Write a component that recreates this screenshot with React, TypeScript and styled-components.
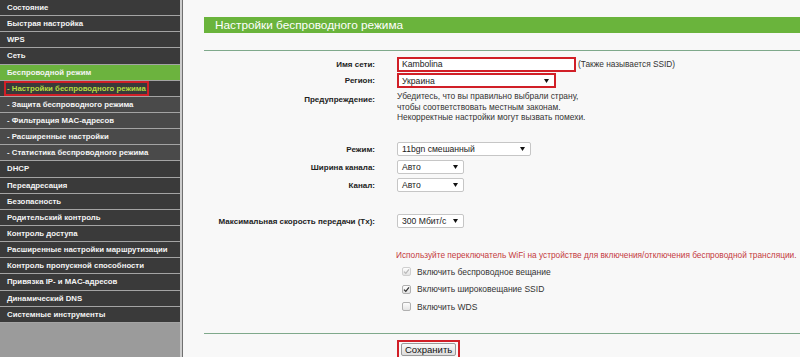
import React from "react";
import styled, { createGlobalStyle } from "styled-components";

const GlobalStyle = createGlobalStyle`
  html, body { margin: 0; padding: 0; }
  body { font-family: "Liberation Sans", Arial, sans-serif; background: #f8f8f8; }
  #root { width: 800px; height: 357px; overflow: hidden; }
`;

const Page = styled.div`
  display: flex;
  width: 800px;
  height: 357px;
  overflow: hidden;
`;

const SidebarFrame = styled.aside`
  flex: none;
  display: flex;
  border-right: 1px solid #707070;
`;

const Sidebar = styled.nav`
  width: 180px;
  height: 100%;
  background: #9b9b9b;
  border-right: 2px solid #cdcdcd;
  display: flex;
  flex-direction: column;
`;

type Kind = "main" | "sub" | "section";

const MenuItem = styled.div<{ $kind: Kind; $active?: boolean }>`
  flex: none;
  height: 15.15px;
  border-bottom: 1px solid #a4a4a4;
  display: flex;
  align-items: center;
  padding-left: ${(p) => (p.$active ? 4 : 7)}px;
  background: ${(p) =>
    p.$kind === "section" ? "#6cb33e" : p.$kind === "sub" ? "#4a4a4a" : "#3a3a3a"};
  color: ${(p) => (p.$active ? "#b6dc3e" : "#f4f4f4")};
  font-size: 7.8px;
  font-weight: bold;
  white-space: nowrap;
`;

const ActiveMark = styled.span`
  border: 2px solid #d11f27;
  padding: 0 1px;
  line-height: 11px;
`;

const Main = styled.main`
  flex: 1;
  min-width: 0;
  background: #f8f8f8;
  padding: 17px 0 0 21px;
  overflow: hidden;
`;

const TitleBar = styled.div`
  height: 16px;
  line-height: 16px;
  background: #6ab43c;
  color: #fff;
  font-size: 11.8px;
  padding-left: 11px;
  white-space: nowrap;
`;

const Divider = styled.div<{ $mt: number }>`
  height: 1px;
  background: #7fa98b;
  margin-top: ${(p) => p.$mt}px;
`;

const FieldRow = styled.div<{ $h: number; $mt?: number; $top?: boolean }>`
  display: grid;
  grid-template-columns: 171px 1fr;
  column-gap: 22px;
  align-items: ${(p) => (p.$top ? "start" : "center")};
  height: ${(p) => p.$h}px;
  margin-top: ${(p) => p.$mt ?? 0}px;
`;

const Label = styled.div<{ $pt?: number }>`
  text-align: right;
  font-weight: bold;
  font-size: 8px;
  color: #222;
  white-space: nowrap;
  padding-top: ${(p) => p.$pt ?? 0}px;
`;

const Inline = styled.div`
  display: flex;
  align-items: center;
`;

const TextInput = styled.input`
  box-sizing: border-box;
  width: 179px;
  height: 15px;
  border: 2px solid #d11f27;
  padding: 0 3px;
  margin: 0;
  font: 8.6px "Liberation Sans", Arial, sans-serif;
  color: #222;
  background: #fff;
  outline: none;
`;

const Note = styled.span`
  margin-left: 2px;
  font-size: 8.3px;
  color: #333;
  white-space: nowrap;
`;

const SelectBox = styled.div<{ $w: number; $marked?: boolean }>`
  box-sizing: border-box;
  width: ${(p) => p.$w}px;
  height: ${(p) => (p.$marked ? 15 : 14)}px;
  display: flex;
  align-items: center;
  justify-content: space-between;
  border: ${(p) => (p.$marked ? "2px solid #d11f27" : "1px solid #c6c6c6")};
  border-radius: ${(p) => (p.$marked ? 0 : 2)}px;
  background: #fff;
  padding: 0 5px 0 ${(p) => (p.$marked ? 3 : 4)}px;
  font-size: 8.6px;
  color: #222;
  white-space: nowrap;
`;

const Warning = styled.div`
  font-size: 8.4px;
  line-height: 10.5px;
  color: #333;
  white-space: nowrap;
`;

const RedNote = styled.div`
  font-size: 8.3px;
  line-height: 12px;
  color: #c43a40;
  white-space: nowrap;
  margin-left: -1px;
`;

const CheckRow = styled.label`
  display: flex;
  align-items: center;
  gap: 6px;
  padding-left: 5px;
  height: 17.5px;
  font-size: 8.5px;
  color: #333;
  white-space: nowrap;
`;

const Box = styled.span<{ $disabled?: boolean }>`
  width: 9px;
  height: 9px;
  box-sizing: border-box;
  border: 1px solid ${(p) => (p.$disabled ? "#cfcfcf" : "#b0b0b0")};
  border-radius: 2px;
  background: linear-gradient(#fdfdfd, #e4e4e4);
  display: flex;
  align-items: center;
  justify-content: center;
`;

const ButtonMark = styled.span`
  display: inline-flex;
  border: 2px solid #d11f27;
  padding: 1px 2px;
`;

const SaveButton = styled.button`
  height: 13px;
  padding: 0 3px;
  margin: 0;
  border: 1px solid #9a9a9a;
  border-radius: 2px;
  background: linear-gradient(#f8f8f8, #dcdcdc);
  font: 9.5px "Liberation Sans", Arial, sans-serif;
  color: #111;
  line-height: 11px;
`;

const Arrow = () => (
  <svg width="5" height="4" viewBox="0 0 5 4">
    <polygon points="0,0 5,0 2.5,4" fill="#111" />
  </svg>
);

const Check = ({ color }: { color: string }) => (
  <svg width="7" height="7" viewBox="0 0 7 7">
    <path d="M1 3.6 L2.8 5.4 L6 1.4" stroke={color} strokeWidth="1.3" fill="none" />
  </svg>
);

const menu: { text: string; kind: Kind; active?: boolean }[] = [
  { text: "Состояние", kind: "main" },
  { text: "Быстрая настройка", kind: "main" },
  { text: "WPS", kind: "main" },
  { text: "Сеть", kind: "main" },
  { text: "Беспроводной режим", kind: "section" },
  { text: "- Настройки беспроводного режима", kind: "main", active: true },
  { text: "- Защита беспроводного режима", kind: "sub" },
  { text: "- Фильтрация MAC-адресов", kind: "sub" },
  { text: "- Расширенные настройки", kind: "sub" },
  { text: "- Статистика беспроводного режима", kind: "sub" },
  { text: "DHCP", kind: "main" },
  { text: "Переадресация", kind: "main" },
  { text: "Безопасность", kind: "main" },
  { text: "Родительский контроль", kind: "main" },
  { text: "Контроль доступа", kind: "main" },
  { text: "Расширенные настройки маршрутизации", kind: "main" },
  { text: "Контроль пропускной способности", kind: "main" },
  { text: "Привязка IP- и MAC-адресов", kind: "main" },
  { text: "Динамический DNS", kind: "main" },
  { text: "Системные инструменты", kind: "main" },
];

export default function App() {
  return (
    <>
      <GlobalStyle />
      <Page>
        <SidebarFrame>
          <Sidebar>
            {menu.map((m) => (
              <MenuItem key={m.text} $kind={m.kind} $active={m.active}>
                {m.active ? <ActiveMark>{m.text}</ActiveMark> : m.text}
              </MenuItem>
            ))}
          </Sidebar>
        </SidebarFrame>
        <Main>
          <TitleBar>Настройки беспроводного режима</TitleBar>
          <Divider $mt={17} />

          <FieldRow $h={16} $mt={5}>
            <Label>Имя сети:</Label>
            <Inline>
              <TextInput value="Kambolina" readOnly />
              <Note>(Также называется SSID)</Note>
            </Inline>
          </FieldRow>
          <FieldRow $h={17}>
            <Label>Регион:</Label>
            <SelectBox $w={159} $marked>
              <span>Украина</span>
              <Arrow />
            </SelectBox>
          </FieldRow>
          <FieldRow $h={32} $mt={2} $top>
            <Label $pt={4}>Предупреждение:</Label>
            <Warning>
              Убедитесь, что вы правильно выбрали страну,
              <br />
              чтобы соответствовать местным законам.
              <br />
              Некорректные настройки могут вызвать помехи.
            </Warning>
          </FieldRow>

          <FieldRow $h={18} $mt={17}>
            <Label>Режим:</Label>
            <SelectBox $w={134}>
              <span>11bgn смешанный</span>
              <Arrow />
            </SelectBox>
          </FieldRow>
          <FieldRow $h={18}>
            <Label>Ширина канала:</Label>
            <SelectBox $w={67}>
              <span>Авто</span>
              <Arrow />
            </SelectBox>
          </FieldRow>
          <FieldRow $h={18}>
            <Label>Канал:</Label>
            <SelectBox $w={67}>
              <span>Авто</span>
              <Arrow />
            </SelectBox>
          </FieldRow>
          <FieldRow $h={18} $mt={18}>
            <Label>Максимальная скорость передачи (Tx):</Label>
            <SelectBox $w={67}>
              <span>300 Мбит/с</span>
              <Arrow />
            </SelectBox>
          </FieldRow>

          <FieldRow $h={12} $mt={19}>
            <span />
            <RedNote>
              Используйте переключатель WiFi на устройстве для включения/отключения беспроводной трансляции.
            </RedNote>
          </FieldRow>
          <FieldRow $h={52.5} $mt={2} $top>
            <span />
            <div>
              <CheckRow>
                <Box $disabled>
                  <Check color="#b8b8b8" />
                </Box>
                Включить беспроводное вещание
              </CheckRow>
              <CheckRow>
                <Box>
                  <Check color="#333" />
                </Box>
                Включить широковещание SSID
              </CheckRow>
              <CheckRow>
                <Box />
                Включить WDS
              </CheckRow>
            </div>
          </FieldRow>

          <Divider $mt={17.5} />
          <FieldRow $h={17} $mt={5} $top>
            <span />
            <div>
              <ButtonMark>
                <SaveButton>Сохранить</SaveButton>
              </ButtonMark>
            </div>
          </FieldRow>
        </Main>
      </Page>
    </>
  );
}
